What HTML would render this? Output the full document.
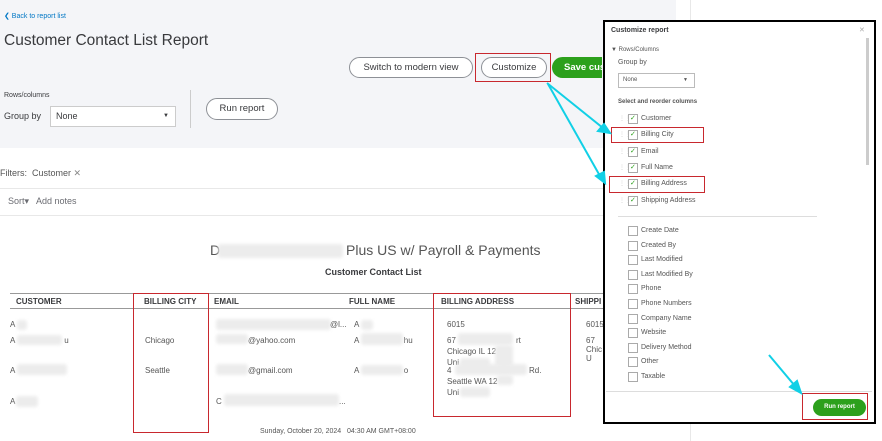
<!DOCTYPE html>
<html><head><style>
*{margin:0;padding:0;box-sizing:border-box}
body{width:882px;height:441px;position:relative;overflow:hidden;background:#fff;font-family:"Liberation Sans",sans-serif;color:#393a3d}
.a{position:absolute;white-space:nowrap}
.btn{position:absolute;border:1px solid #8d9096;border-radius:14px;background:#fff;font-size:9.5px;text-align:center;color:#393a3d}
.blur{position:absolute;background:#ececec;border-radius:3px;filter:blur(1.5px)}
.h{font-size:8px;font-weight:bold;color:#393a3d}
.c{font-size:8px;color:#555}
.p{font-size:7px;color:#555;line-height:10px}
.cb{position:absolute;width:10px;height:10px;border:1px solid #aaa;background:#fff}
.ck{color:#2ca01c;font-size:7px;position:absolute;left:1px;top:-1px}
.rb{position:absolute;border:1.5px solid #c8282e}
</style></head><body>
<div class="a" style="left:0;top:0;width:676px;height:148px;background:#f4f5f8"></div>
<div class="a" style="left:690px;top:0;width:1px;height:441px;background:#e8e8e8"></div>
<div class="a" style="left:4px;top:12px;font-size:7px;color:#0077c5">&#10094; Back to report list</div>
<div class="a" style="left:4px;top:32px;font-size:15.5px;color:#393a3d">Customer Contact List Report</div>
<div class="btn" style="left:349px;top:57px;width:124px;height:21px;line-height:19px">Switch to modern view</div>
<div class="btn" style="left:481px;top:57px;width:66px;height:21px;line-height:19px">Customize</div>
<div class="rb" style="left:475px;top:53px;width:76px;height:29px"></div>
<div class="a" style="left:552px;top:57px;width:50px;height:21px;background:#2ca01c;border-radius:12px 0 0 12px;color:#fff;font-size:9.5px;font-weight:bold;line-height:21px;padding-left:12px;overflow:hidden">Save cus</div>
<div class="a" style="left:4px;top:92px;font-size:7px">Rows/columns</div>
<div class="a" style="left:4px;top:111px;font-size:9px">Group by</div>
<div class="a" style="left:50px;top:106px;width:126px;height:21px;background:#fff;border:1px solid #ccc;font-size:9px;line-height:19px;padding-left:5px">None<span style="position:absolute;right:6px;font-size:6px">&#9660;</span></div>
<div class="a" style="left:190px;top:90px;width:1px;height:38px;background:#ccc"></div>
<div class="btn" style="left:206px;top:98px;width:72px;height:22px;line-height:20px">Run report</div>
<div class="a" style="left:0;top:168px;font-size:9px;color:#555">Filters:&nbsp; Customer <span style="color:#888">&#10005;</span></div>
<div class="a" style="left:0;top:188px;width:603px;height:1px;background:#e8e8e8"></div>
<div class="a" style="left:0;top:215px;width:603px;height:1px;background:#e8e8e8"></div>
<div class="a" style="left:8px;top:196px;font-size:9px;color:#6b6c72">Sort&#9662;&nbsp;&nbsp; Add notes</div>
<div class="a" style="left:210px;top:242px;font-size:14px;color:#555">D</div>
<div class="blur" style="left:218px;top:244px;width:125px;height:14px"></div>
<div class="a" style="left:346px;top:242px;font-size:14px;color:#555">Plus US w/ Payroll &amp; Payments</div>
<div class="a" style="left:325px;top:267px;font-size:9px;font-weight:bold">Customer Contact List</div>
<div class="a" style="left:10px;top:293px;width:593px;height:1px;background:#999"></div>
<div class="a" style="left:10px;top:308px;width:593px;height:1px;background:#999"></div>
<div class="a h" style="left:16px;top:297px">CUSTOMER</div>
<div class="a h" style="left:144px;top:297px">BILLING CITY</div>
<div class="a h" style="left:214px;top:297px">EMAIL</div>
<div class="a h" style="left:349px;top:297px">FULL NAME</div>
<div class="a h" style="left:441px;top:297px">BILLING ADDRESS</div>
<div class="a h" style="left:575px;top:297px">SHIPPI</div>
<div class="a c" style="left:10px;top:320px">A</div><div class="blur" style="left:17px;top:320px;width:10px;height:10px"></div>
<div class="a c" style="left:10px;top:336px">A&nbsp;&nbsp;&nbsp;&nbsp;&nbsp;&nbsp;&nbsp;&nbsp;&nbsp;&nbsp;&nbsp;&nbsp;&nbsp;&nbsp;&nbsp;&nbsp;&nbsp;&nbsp;&nbsp;&nbsp;&nbsp;&nbsp;u</div><div class="blur" style="left:17px;top:335px;width:45px;height:10px"></div>
<div class="a c" style="left:10px;top:366px">A</div><div class="blur" style="left:17px;top:364px;width:50px;height:11px"></div>
<div class="a c" style="left:10px;top:397px">A</div><div class="blur" style="left:16px;top:396px;width:22px;height:11px"></div>
<div class="a c" style="left:145px;top:336px">Chicago</div>
<div class="a c" style="left:145px;top:366px">Seattle</div>
<div class="blur" style="left:216px;top:319px;width:115px;height:11px"></div><div class="a c" style="left:330px;top:320px">@l...</div>
<div class="blur" style="left:216px;top:334px;width:32px;height:10px"></div><div class="a c" style="left:248px;top:336px">@yahoo.com</div>
<div class="blur" style="left:216px;top:364px;width:32px;height:11px"></div><div class="a c" style="left:248px;top:366px">@gmail.com</div>
<div class="a c" style="left:216px;top:397px">C</div><div class="blur" style="left:224px;top:394px;width:115px;height:12px"></div><div class="a c" style="left:339px;top:397px">...</div>
<div class="a c" style="left:354px;top:320px">A</div><div class="blur" style="left:361px;top:320px;width:12px;height:10px"></div>
<div class="a c" style="left:354px;top:336px">A&nbsp;&nbsp;&nbsp;&nbsp;&nbsp;&nbsp;&nbsp;&nbsp;&nbsp;&nbsp;&nbsp;&nbsp;&nbsp;&nbsp;&nbsp;&nbsp;&nbsp;&nbsp;&nbsp;&nbsp;hu</div><div class="blur" style="left:361px;top:333px;width:42px;height:12px"></div>
<div class="a c" style="left:354px;top:366px">A&nbsp;&nbsp;&nbsp;&nbsp;&nbsp;&nbsp;&nbsp;&nbsp;&nbsp;&nbsp;&nbsp;&nbsp;&nbsp;&nbsp;&nbsp;&nbsp;&nbsp;&nbsp;&nbsp;&nbsp;o</div><div class="blur" style="left:361px;top:365px;width:42px;height:10px"></div>
<div class="a c" style="left:447px;top:320px">6015</div>
<div class="a c" style="left:447px;top:336px">67</div><div class="a c" style="left:516px;top:336px">rt</div>
<div class="a c" style="left:447px;top:347px">Chicago IL 12</div>
<div class="a c" style="left:447px;top:358px">Uni</div>
<div class="blur" style="left:458px;top:333px;width:55px;height:12px"></div>
<div class="blur" style="left:495px;top:345px;width:18px;height:22px"></div>
<div class="blur" style="left:460px;top:358px;width:30px;height:10px"></div>
<div class="a c" style="left:447px;top:366px">4</div><div class="a c" style="left:529px;top:366px">Rd.</div>
<div class="a c" style="left:447px;top:377px">Seattle WA 12</div>
<div class="a c" style="left:447px;top:388px">Uni</div>
<div class="blur" style="left:455px;top:364px;width:72px;height:11px"></div>
<div class="blur" style="left:497px;top:375px;width:16px;height:10px"></div>
<div class="blur" style="left:460px;top:387px;width:30px;height:10px"></div>
<div class="a c" style="left:586px;top:320px">6015</div>
<div class="a c" style="left:586px;top:336px">67<br>Chic<br>U</div>
<div class="a" style="left:260px;top:428px;font-size:7px;color:#555">Sunday, October 20, 2024&nbsp;&nbsp; 04:30 AM GMT+08:00</div>
<div class="rb" style="left:133px;top:293px;width:76px;height:140px"></div>
<div class="rb" style="left:433px;top:293px;width:138px;height:124px"></div>

<div class="a" style="left:603px;top:20px;width:273px;height:404px;background:#fff;border:2px solid #000"></div>
<div class="a" style="left:611px;top:27px;font-size:7px;font-weight:bold">Customize report</div>
<div class="a" style="left:859px;top:26px;font-size:7px;color:#aaa">&#10005;</div>
<div class="a" style="left:866px;top:38px;width:3px;height:127px;background:#ccc"></div>
<div class="a p" style="left:611px;top:45px;font-size:6px">&#9660; Rows/Columns</div>
<div class="a p" style="left:618px;top:58px">Group by</div>
<div class="a" style="left:618px;top:73px;width:77px;height:15px;border:1px solid #bbb;font-size:6px;line-height:13px;padding-left:4px;color:#555">None<span style="position:absolute;right:6px;font-size:5px">&#9660;</span></div>
<div class="a p" style="left:618px;top:97px;font-size:6px;font-weight:bold">Select and reorder columns</div>
<div class="a" style="left:618px;top:216px;width:199px;height:1px;background:#ddd"></div>
<div class="a" style="left:606px;top:391px;width:266px;height:1px;background:#ddd"></div>
<div class="rb" style="left:611px;top:127px;width:93px;height:16px"></div>
<div class="rb" style="left:609px;top:176px;width:96px;height:17px"></div>
<div class="rb" style="left:802px;top:393px;width:66px;height:27px"></div>
<div class="a" style="left:813px;top:399px;width:53px;height:17px;background:#2ca01c;border-radius:9px;color:#fff;font-size:6px;font-weight:bold;text-align:center;line-height:17px;display:flex;align-items:center;justify-content:center">Run report</div>
<div id="list"></div>
<script>
var ck=["Customer","Billing City","Email","Full Name","Billing Address","Shipping Address"];
var un=["Create Date","Created By","Last Modified","Last Modified By","Phone","Phone Numbers","Company Name","Website","Delivery Method","Other","Taxable","Tax Rate"];
var h="";
ck.forEach(function(t,i){var y=114+i*16.3;h+='<div class="a" style="left:619px;top:'+(y+1)+'px;font-size:6px;color:#ccc">&#8942;&#8942;</div><div class="cb" style="left:628px;top:'+y+'px"><span class="ck">&#10003;</span></div><div class="a p" style="left:641px;top:'+y+'px">'+t+'</div>';});
un.forEach(function(t,i){var y=226+i*14.6;if(y>385)return;h+='<div class="cb" style="left:628px;top:'+y+'px"></div><div class="a p" style="left:641px;top:'+y+'px">'+t+'</div>';});
document.getElementById("list").innerHTML=h;
</script>
<svg class="a" style="left:0;top:0" width="882" height="441">
<g stroke="#11d0e6" stroke-width="2" fill="#11d0e6">
<line x1="547" y1="83" x2="603" y2="128"/>
<line x1="548" y1="84" x2="600" y2="176"/>
<line x1="769" y1="355" x2="795" y2="386"/>
<polygon points="610,133 598,131 604,124"/>
<polygon points="605,183 596,176 604,172"/>
<polygon points="801,393 790,387 797,381"/>
</g></svg>
</body></html>
